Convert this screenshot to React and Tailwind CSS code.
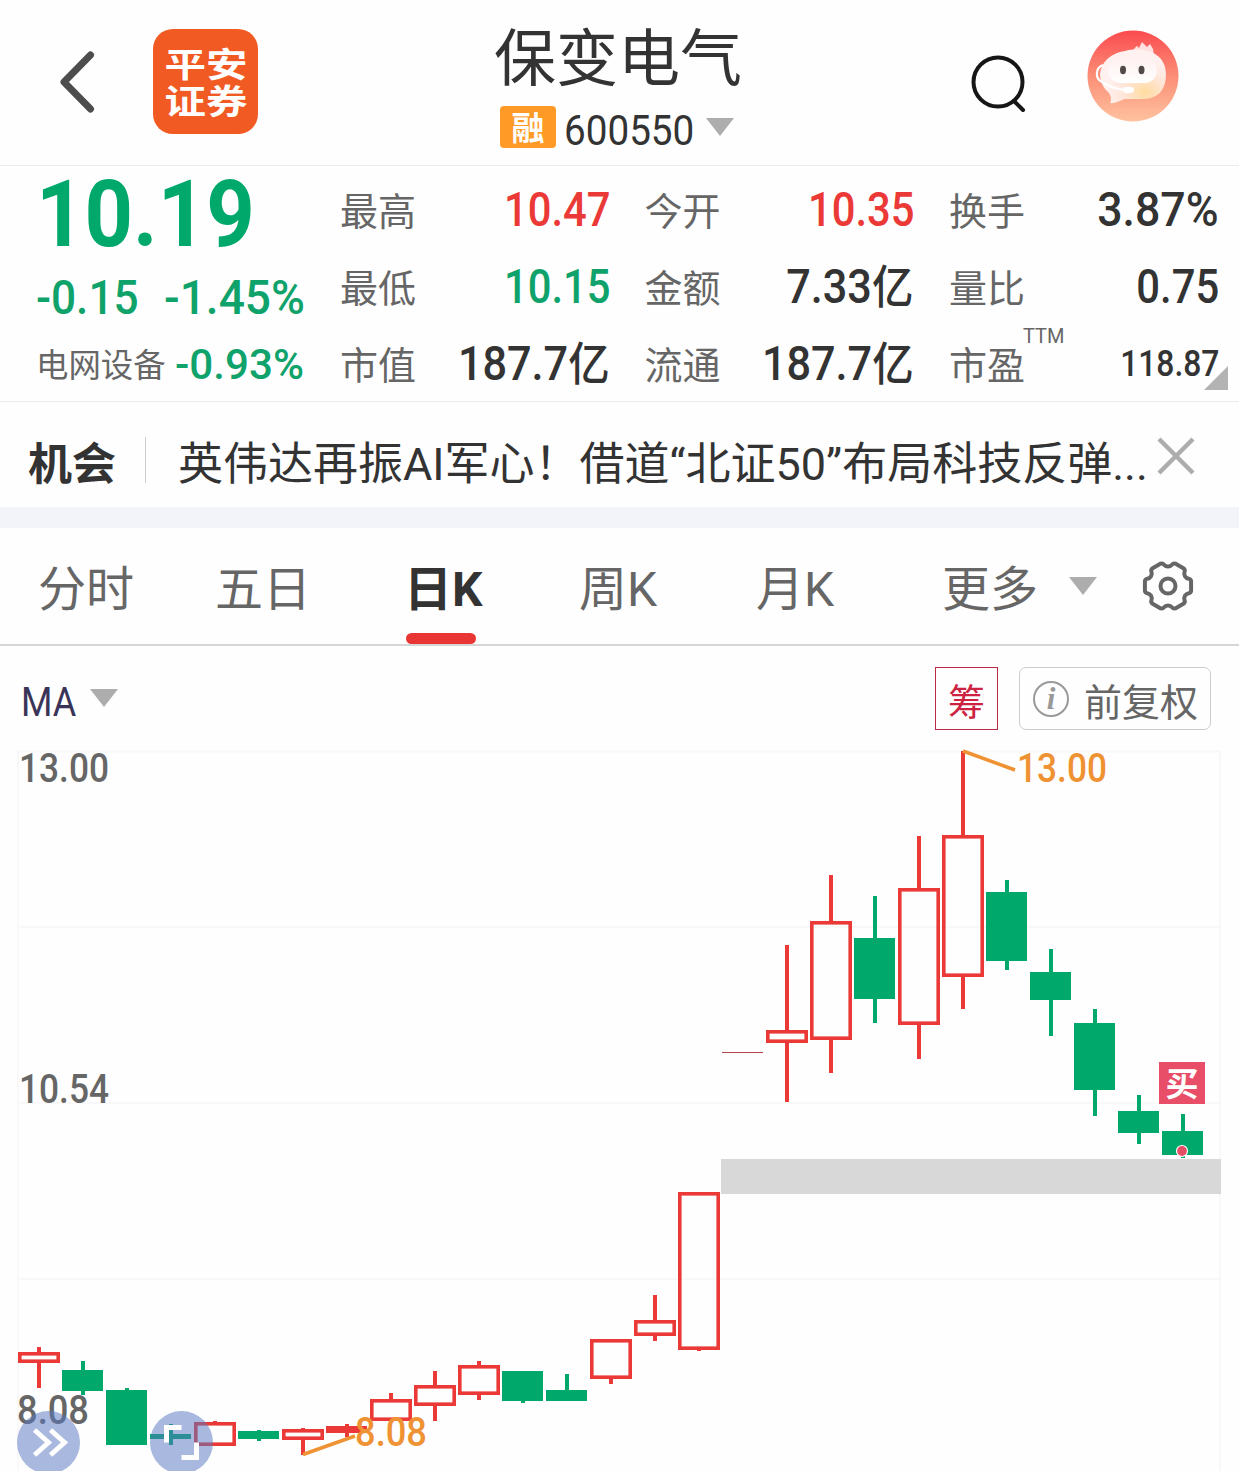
import React from "react";

const GREEN = "#00a86b";
const RED = "#ea3936";

// [centre x, kind, high, body top, body bottom, low]
const CANDLES = [
  [39, "up", 1347, 1352, 1363, 1388],
  [83, "down", 1361, 1370, 1391, 1395],
  [127, "down", 1388, 1390, 1445, 1445],
  [171, "down", 1424, 1434, 1439, 1445],
  [215, "up", 1421, 1422, 1446, 1446],
  [259, "down", 1430, 1431, 1439, 1441],
  [303, "up", 1428, 1429, 1440, 1455],
  [347, "flat", 1424, 1426, 1433, 1437],
  [391, "up", 1393, 1399, 1421, 1421],
  [435, "up", 1371, 1385, 1406, 1421],
  [479, "up", 1361, 1365, 1395, 1400],
  [523, "down", 1371, 1371, 1401, 1403],
  [567, "down", 1374, 1390, 1401, 1401],
  [611, "up", 1339, 1339, 1379, 1384],
  [655, "up", 1295, 1320, 1336, 1341],
  [699, "up", 1192, 1192, 1350, 1351],
  [787, "up", 945, 1030, 1043, 1102],
  [831, "up", 875, 921, 1040, 1073],
  [875, "down", 896, 938, 999, 1023],
  [919, "up", 836, 888, 1025, 1059],
  [963, "up", 751, 835, 977, 1009],
  [1007, "down", 880, 892, 961, 970],
  [1051, "down", 949, 972, 1000, 1036],
  [1095, "down", 1009, 1023, 1090, 1116],
  [1139, "down", 1095, 1111, 1133, 1144],
  [1183, "down", 1114, 1131, 1155, 1158],
];

function Candle({ data }) {
  const [x, kind, high, top, bottom, low] = data;
  const color = kind === "down" ? GREEN : RED;
  return (
    <g>
      <path d={`M${x} ${high}V${top + 1}M${x} ${bottom - 1}V${low}`} stroke={color} strokeWidth="4" />
      {kind === "up" ? (
        <rect x={x - 19.2} y={top + 1.8} width="38.4" height={bottom - top - 3.6} fill="none" stroke={color} strokeWidth="3.6" />
      ) : (
        <rect x={x - 21} y={top} width="41" height={bottom - top} fill={color} />
      )}
    </g>
  );
}

function Triangle({ className }) {
  return (
    <svg viewBox="0 0 28 18" className={`h-[18px] w-7 shrink-0 ${className}`}>
      <path d="M0 0H28L14 18Z" fill="#adadad" />
    </svg>
  );
}

function gearPath() {
  const at = (r, deg) => {
    const a = (deg * Math.PI) / 180;
    return `${(26 + r * Math.cos(a)).toFixed(2)} ${(26 + r * Math.sin(a)).toFixed(2)}`;
  };
  let d = `M${at(23.6, -12)}`;
  for (let i = 0; i < 6; i += 1) {
    const a = i * 60;
    d += `L${at(23.6, a + 12)}Q${at(23.6, a + 17)} ${at(22, a + 19)}`;
    d += `C${at(19, a + 24)} ${at(19, a + 36)} ${at(22, a + 41)}Q${at(23.6, a + 43)} ${at(23.6, a + 48)}`;
  }
  return `${d}Z`;
}

function Mascot() {
  return (
    <svg viewBox="0 0 92 92" className="ml-[58px] mt-[30px] h-[92px] w-[92px] shrink-0">
      <defs>
        <linearGradient id="sky" x1="0" y1="0" x2="0" y2="1">
          <stop offset="0" stopColor="#fb4b50" />
          <stop offset=".5" stopColor="#fb8e76" />
          <stop offset="1" stopColor="#ffc2a0" />
        </linearGradient>
        <radialGradient id="head" cx=".68" cy=".8" r=".6">
          <stop offset="0" stopColor="#ffdc9e" />
          <stop offset=".55" stopColor="#ffe6da" />
          <stop offset="1" stopColor="#fff1ef" />
        </radialGradient>
        <linearGradient id="face" x1="0" y1="0" x2="0" y2="1">
          <stop offset="0" stopColor="#fff0f0" />
          <stop offset="1" stopColor="#fff" />
        </linearGradient>
      </defs>
      <circle cx="46" cy="46" r="45.5" fill="url(#sky)" />
      <path d="M46 21C48 17 50 16 50 16L52 18L55 12L60 17L63 14L66 19L67 25Z" fill="#ffe1df" />
      <path d="M38 21C48 18 62 20 68 24C77 29 81 40 78 53C75 64 67 69 56 69H38C34 70 28 74 23 73C25 70 24 66 22 63C16 58 13 51 13 44C14 32 24 23 38 21Z" fill="url(#head)" />
      <rect x="21" y="28" width="49" height="25" rx="12.5" fill="url(#face)" />
      <path d="M16 35C8 38 8 49 15 52C22 57 30 59 38 60" fill="none" stroke="#fff" strokeWidth="2.2" />
      <rect x="36" y="57" width="11" height="6" rx="3" fill="#fff" />
      <ellipse cx="36" cy="40" rx="3" ry="4.2" fill="#514a48" />
      <ellipse cx="54.500" cy="40" rx="3" ry="4.2" fill="#514a48" />
    </svg>
  );
}

function Header() {
  return (
    <header className="flex h-[166px] items-start border-b border-[#ebebeb]">
      <svg viewBox="0 0 40 70" className="ml-[56px] mt-[47px] h-[70px] w-10 shrink-0">
        <path d="M34.500 8L8 35L34.500 62" fill="none" stroke="#4d4d4d" strokeWidth="7" strokeLinecap="round" strokeLinejoin="round" />
      </svg>
      <div className="ml-[57px] mt-[29px] flex h-[105px] w-[105px] shrink-0 flex-col items-center justify-center rounded-[20px] bg-[#f15a22] pt-[5px] text-[34px] font-bold leading-[37px] text-white">
        <span className="scale-x-[1.22]">平安</span>
        <span className="scale-x-[1.22]">证券</span>
      </div>
      <div className="ml-[236px] flex w-[252px] shrink-0 flex-col">
        <h1 className="mt-[24px] whitespace-nowrap text-[62px] leading-[72px] text-[#333]">保变电气</h1>
        <div className="mt-[10px] flex h-[42px] items-center pl-[6px]">
          <span className="flex h-[42px] w-14 shrink-0 items-center justify-center rounded-sm bg-[#ff9a27] pt-[2px] text-[33px] font-bold leading-none text-white">融</span>
          <span className="ml-[8px] mt-[8px] w-[133px] origin-left scale-x-[0.92] whitespace-nowrap text-[42px] leading-none text-[#333]">600550</span>
          <Triangle className="ml-[9px]" />
        </div>
      </div>
      <svg viewBox="0 0 60 60" className="ml-[223px] mt-[54px] h-[60px] w-[60px] shrink-0 overflow-visible" fill="none" stroke="#161616" strokeWidth="4" strokeLinecap="round">
        <circle cx="29" cy="28" r="24.500" />
        <path d="M45 47L54 56" />
      </svg>
      <Mascot />
    </header>
  );
}

const NUMBER = "scale-x-[0.87] text-[48px]";
const NUMBER_UNIT = "scale-x-[0.9] text-[48px]";
const NUMBER_PERCENT = "scale-x-[0.93] text-[48px]";
const NUMBER_SMALL = "scale-x-[0.86] text-[37px]";

function Stat({ label, value, color = "text-[#333]", unit, fit = NUMBER, note }) {
  return (
    <div className="flex h-[77px] items-center justify-between">
      <span className="relative mt-1 whitespace-nowrap text-[38px] leading-none text-[#666]">
        {label}
        {note && <span className="absolute -top-[21px] left-[74px] text-[20px] leading-none">{note}</span>}
      </span>
      <span className={`flex origin-right items-center whitespace-nowrap font-medium leading-none ${fit} ${color}`}>
        {value}
        {unit && <span className="w-[47px] text-[46px]">{unit}</span>}
      </span>
    </div>
  );
}

function Quote() {
  return (
    <section className="relative flex h-[236px] border-b border-[#ebebeb]">
      <div className="flex w-[340px] shrink-0 flex-col pl-9 text-[#0fa36b]">
        <div className="mt-[3px] origin-left scale-x-[0.92] whitespace-nowrap text-[92px] font-bold leading-[92px] text-[#00a86b]">10.19</div>
        <div className="mt-[11px] flex h-[52px] whitespace-nowrap text-[48px] font-medium leading-[52px]">
          <span className="w-[128px] origin-left scale-x-[0.92]">-0.15</span>
          <span className="origin-left scale-x-[0.96]">-1.45%</span>
        </div>
        <div className="mt-[14px] flex h-[52px] items-center whitespace-nowrap">
          <span className="mt-1 w-[139px] text-[32.400px] leading-none text-[#666]">电网设备</span>
          <span className="origin-left scale-x-[0.98] text-[43px] font-medium leading-none">-0.93%</span>
        </div>
      </div>
      <div className="mt-[5px] grid w-[879px] grid-cols-[270px_270px_270px] content-start gap-x-[34.500px]">
        <Stat label="最高" value="10.47" color="text-[#ea3936]" />
        <Stat label="今开" value="10.35" color="text-[#ea3936]" />
        <Stat label="换手" value="3.87%" fit={NUMBER_PERCENT} />
        <Stat label="最低" value="10.15" color="text-[#0fa36b]" />
        <Stat label="金额" value="7.33" unit="亿" fit={NUMBER_UNIT} />
        <Stat label="量比" value="0.75" />
        <Stat label="市值" value="187.7" unit="亿" fit={NUMBER_UNIT} />
        <Stat label="流通" value="187.7" unit="亿" fit={NUMBER_UNIT} />
        <Stat label="市盈" value="118.87" fit={NUMBER_SMALL} note="TTM" />
      </div>
      <svg viewBox="0 0 24 24" className="absolute bottom-[11px] right-[11px] h-6 w-6">
        <path d="M24 0V24H0Z" fill="#b3b3b3" />
      </svg>
    </section>
  );
}

function News() {
  return (
    <section className="flex h-[105px] items-center text-[#333]">
      <span className="ml-7 mt-[20px] w-[117px] text-[44px] font-bold leading-none">机会</span>
      <span className="mt-[11px] h-[46px] w-px bg-[#ccc]" />
      <span className="ml-8 mt-[20px] w-[979px] whitespace-nowrap text-[45px] leading-none">英伟达再振AI军心！借道“北证50”布局科技反弹...</span>
      <svg viewBox="0 0 38 38" className="mt-[3px] h-[38px] w-[38px]">
        <path d="M2 2L36 36M36 2L2 36" stroke="#adadad" strokeWidth="4.500" />
      </svg>
    </section>
  );
}

function Tabs() {
  return (
    <nav className="flex h-[118px] items-center whitespace-nowrap border-b-2 border-[#d6d6d6] text-[48px] leading-none text-[#666]">
      <span className="ml-[38px] w-[177px] pt-[8px]">分时</span>
      <span className="w-[189px] pt-[8px]">五日</span>
      <span className="relative flex h-full w-[175px] items-center pt-[8px] font-bold text-[#333]">
        日K
        <i className="absolute bottom-0 left-[2px] h-[11px] w-[70px] rounded-full bg-[#ea3535]" />
      </span>
      <span className="w-[177px] pt-[8px]">周K</span>
      <span className="w-[186px] pt-[8px]">月K</span>
      <span className="w-[127px] pt-[8px]">更多</span>
      <Triangle className="" />
      <svg viewBox="0 0 52 52" className="ml-[45px] h-[52px] w-[52px] shrink-0" fill="none" stroke="#666" strokeWidth="4" strokeLinejoin="round">
        <path d={gearPath()} />
        <circle cx="26" cy="26" r="7.500" />
      </svg>
    </nav>
  );
}

function Toolbar() {
  return (
    <div className="flex h-[104px] items-start whitespace-nowrap">
      <span className="ml-[21px] mt-[37px] w-[69px] origin-left scale-x-[0.9] text-[40px] leading-none text-[#3a3558]">MA</span>
      <Triangle className="mt-[43px]" />
      <span className="ml-[817px] mt-[21px] flex h-[63px] w-[63px] items-center justify-center border border-[#bd2a45] pt-[9px] text-[37px] leading-none text-[#cd2342]">筹</span>
      <span className="ml-[21px] mt-[21px] flex h-[63px] w-[192px] items-center rounded-[7px] border border-[#ccc] pl-[13px] text-[#666]">
        <span className="flex h-9 w-9 shrink-0 items-center justify-center rounded-full border-2 border-[#999] font-['Liberation_Serif'] text-[31px] font-bold italic leading-none text-[#999]">i</span>
        <span className="ml-[15px] mt-[9px] text-[38px] leading-none">前复权</span>
      </span>
    </div>
  );
}

function Chart() {
  return (
    <svg viewBox="0 750 1239 721" className="block h-[721px] w-[1239px] overflow-visible" fontFamily="Roboto, sans-serif">
      <path d="M18 751.500H1220M18 927H1220M18 1103H1220M18 1279H1220M18 751V1471M1220 751V1471" stroke="#f8f8f8" strokeWidth="2" />
      <path d="M722 1052.500H763" stroke="#b5474a" strokeWidth="1.200" />
      {CANDLES.map((c) => (
        <Candle key={c[0]} data={c} />
      ))}
      <rect x="721" y="1159" width="500" height="35" fill="#d8d8d8" />
      <circle cx="1182" cy="1151" r="5.500" fill="#e34e64" stroke="#fff" strokeWidth="1.200" />
      <rect x="1159" y="1062" width="46" height="42" fill="#e84e68" />
      <text x="1182" y="1096" textAnchor="middle" fontSize="33" fontWeight="700" fill="#fff" fontFamily="'Noto Sans CJK SC', sans-serif">买</text>
      <g fill="none" stroke="#ef9234" strokeWidth="3.500">
        <path d="M963 751L1015 770" />
        <path d="M303 1454.500L355 1436" />
      </g>
      <g fontSize="41" fontWeight="500">
        <g fill="#666">
          <text x="19" y="782" textLength="90" lengthAdjust="spacingAndGlyphs">13.00</text>
          <text x="19" y="1103" textLength="90" lengthAdjust="spacingAndGlyphs">10.54</text>
          <text x="17" y="1424" textLength="72" lengthAdjust="spacingAndGlyphs">8.08</text>
        </g>
        <g fill="#ef9234">
          <text x="1017" y="782" textLength="90" lengthAdjust="spacingAndGlyphs">13.00</text>
          <text x="355" y="1446" textLength="72" lengthAdjust="spacingAndGlyphs">8.08</text>
        </g>
      </g>
      <g fill="#5877bf" fillOpacity=".52">
        <circle cx="48.500" cy="1442.500" r="31.500" />
        <circle cx="181.500" cy="1442.500" r="31.500" />
      </g>
      <g fill="none" stroke="#fff" strokeWidth="5">
        <path d="M34.500 1430L48.500 1442.500L34.500 1455M50.500 1430L64.500 1442.500L50.500 1455" />
        <path d="M181.500 1427.500H166.500V1442.500M181.500 1457.500H196.500V1442.500" />
      </g>
    </svg>
  );
}

export default function App() {
  return (
    <main className="h-[1471px] w-[1239px] overflow-hidden bg-[#fefefe] font-['Roboto','Noto_Sans_CJK_SC',sans-serif]">
      <Header />
      <Quote />
      <News />
      <div className="h-[21px] bg-[#f3f4f9]" />
      <Tabs />
      <Toolbar />
      <Chart />
    </main>
  );
}
